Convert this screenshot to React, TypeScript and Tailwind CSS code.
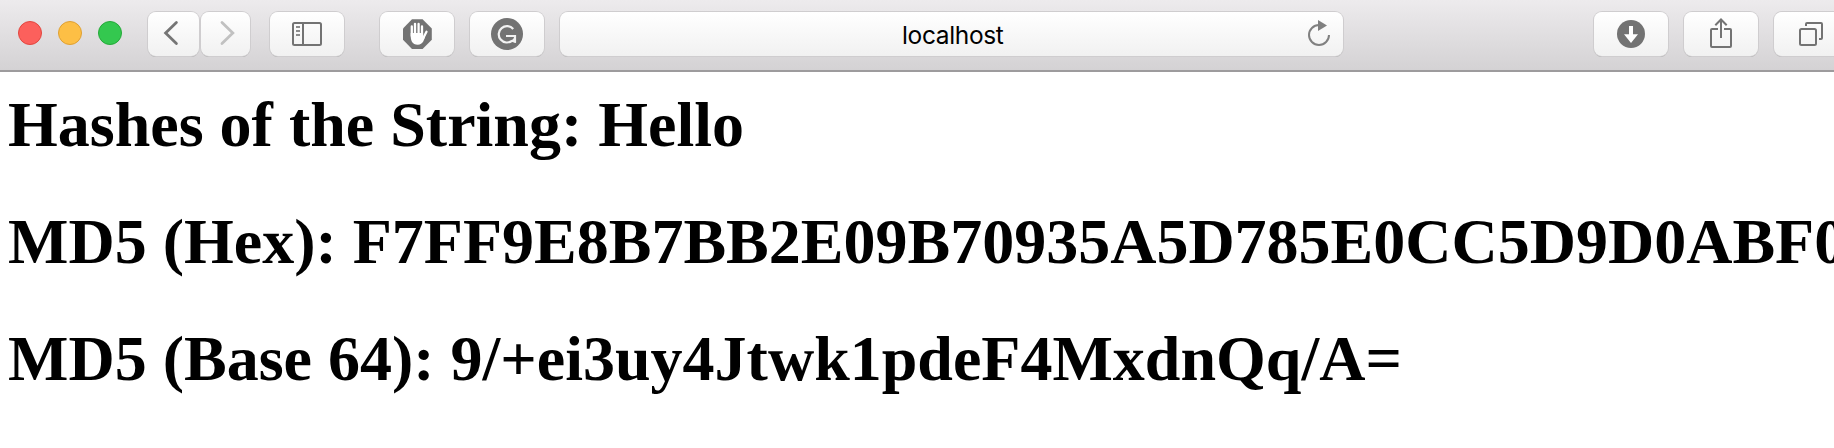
import type { ReactNode } from "react";

function ToolButton({ className, children }: { className: string; children?: ReactNode }) {
  return (
    <button
      className={`h-[44px] shrink-0 rounded-[8px] bg-linear-to-b from-white to-[#f1f1f1] shadow-[0_0_0_1px_#cfcdcf,0_1px_0_0_#a4a2a4] ${className}`}
    >
      {children}
    </button>
  );
}

const icon = "block h-[44px] w-[74px]";

function Light({ className }: { className: string }) {
  return <span className={`size-6 shrink-0 rounded-full border ${className}`} />;
}

export default function App() {
  return (
    <div className="h-[448px] w-[1834px] overflow-hidden bg-white">
      <header className="flex h-[72px] items-start border-b-2 border-[#9d9b9d] bg-linear-to-b from-[#edebed] to-[#d4d2d4] pt-[12px]">
        <div className="ml-[18px] mt-[9px] flex gap-4">
          <Light className="border-[#e2463f] bg-[#fc605c]" />
          <Light className="border-[#dfa033] bg-[#fdbf45]" />
          <Light className="border-[#25a939] bg-[#34c84f]" />
        </div>
        <ToolButton className="ml-[26px] w-[51px]">
          <svg className="block h-[44px] w-[51px]" viewBox="0 0 51 44" fill="none" stroke="#757575" strokeWidth="2.8" strokeLinecap="round">
            <path d="M28.4 10.4 17.6 21 28.4 31.6" />
          </svg>
        </ToolButton>
        <ToolButton className="ml-[2px] w-[49px]">
          <svg className="block h-[44px] w-[49px]" viewBox="0 0 49 44" fill="none" stroke="#c1c1c1" strokeWidth="2.8" strokeLinecap="round">
            <path d="M21 10.4 31.8 21 21 31.6" />
          </svg>
        </ToolButton>
        <ToolButton className="ml-[20px] w-[74px]">
          <svg className={icon} viewBox="0 0 74 44" fill="none" stroke="#737373" strokeWidth="2">
            <rect x="23" y="11" width="28" height="22" rx="1.5" />
            <path d="M33 11v22" />
            <path d="M26 15h4M26 19h4M26 23h4" stroke="#8c8c8c" />
          </svg>
        </ToolButton>
        <ToolButton className="ml-[36px] w-[74px]">
          <svg className={icon} viewBox="0 0 74 44">
            <path d="M32 7.3h10.6l9.2 9.2v11.2l-9.2 9.3H32l-9-9.3V16.5z" fill="#737373" />
            <path
              d="M31.8 24V14.5M35 22V11.8M38.6 22V12M42 23V14.5"
              stroke="#fff"
              strokeWidth="2.3"
              strokeLinecap="round"
            />
            <path d="M43 26.5 46.5 19.8" stroke="#fff" strokeWidth="2.3" strokeLinecap="round" />
            <path d="M30.7 21h12.4v4l2.3-2c-.8 4-2.3 9.8-7.6 9.8-5.8 0-7.1-4.8-7.1-8.8z" fill="#fff" />
          </svg>
        </ToolButton>
        <ToolButton className="ml-[16px] w-[74px]">
          <svg className={icon} viewBox="0 0 74 44" fill="none">
            <circle cx="37" cy="22" r="16" fill="#737373" />
            <path d="M43.2 17a8.2 8.2 0 1 0-1 11.6M36 24h9v6.5" stroke="#f2f2f2" strokeWidth="2.2" />
            <path d="M40.5 29.5 46 24v7z" fill="#f2f2f2" />
          </svg>
        </ToolButton>
        <div className="ml-[16px] flex h-[44px] w-[783px] shrink-0 items-center rounded-[8px] bg-linear-to-b from-white to-[#f1f1f1] pl-[342px] shadow-[0_0_0_1px_#cfcdcf,0_1px_0_0_#a4a2a4]">
          <span className="w-[110px] whitespace-nowrap pt-[1px] font-['Inter',sans-serif] text-[24.5px] leading-[44px] tracking-[-0.35px] text-black">
            localhost
          </span>
          <svg className="ml-[292px] block h-[44px] w-[30px]" viewBox="0 0 30 44" fill="none">
            <path d="M15 13a10 10 0 1 0 10 10" stroke="#808080" strokeWidth="2" />
            <path d="M14 8 23 13.5 14 19z" fill="#808080" />
          </svg>
        </div>
        <ToolButton className="ml-[251px] w-[74px]">
          <svg className={icon} viewBox="0 0 74 44">
            <circle cx="37" cy="22" r="14" fill="#737373" />
            <path d="M35 14h4v8.3h5L37 31l-7-8.7h5z" fill="#fff" />
          </svg>
        </ToolButton>
        <ToolButton className="ml-[16px] w-[74px]">
          <svg className={icon} viewBox="0 0 74 44" fill="none" stroke="#737373" strokeWidth="2">
            <path d="M34 17h-6a1 1 0 0 0-1 1v16a1 1 0 0 0 1 1h18a1 1 0 0 0 1-1V18a1 1 0 0 0-1-1h-6M37 26V8M31.3 13.3 37 7.5l5.7 5.8" />
          </svg>
        </ToolButton>
        <ToolButton className="ml-[16px] w-[74px]">
          <svg className={icon} viewBox="0 0 74 44" fill="none" stroke="#737373" strokeWidth="2">
            <rect x="26" y="17" width="16" height="16" rx="1.5" />
            <path d="M32 14v-2a1 1 0 0 1 1-1h14a1 1 0 0 1 1 1v14a1 1 0 0 1-1 1h-2" />
          </svg>
        </ToolButton>
      </header>
      <main className="flex flex-col gap-[43px] whitespace-nowrap pl-2 pt-[16px] font-['Liberation_Serif',serif] text-[64px] font-bold leading-[74px] text-black [font-kerning:none]">
        <h1>Hashes of the String: Hello</h1>
        <h1>MD5 (Hex): F7FF9E8B7BB2E09B70935A5D785E0CC5D9D0ABF0</h1>
        <h1>MD5 (Base 64): 9/+ei3uy4Jtwk1pdeF4MxdnQq/A=</h1>
      </main>
    </div>
  );
}
